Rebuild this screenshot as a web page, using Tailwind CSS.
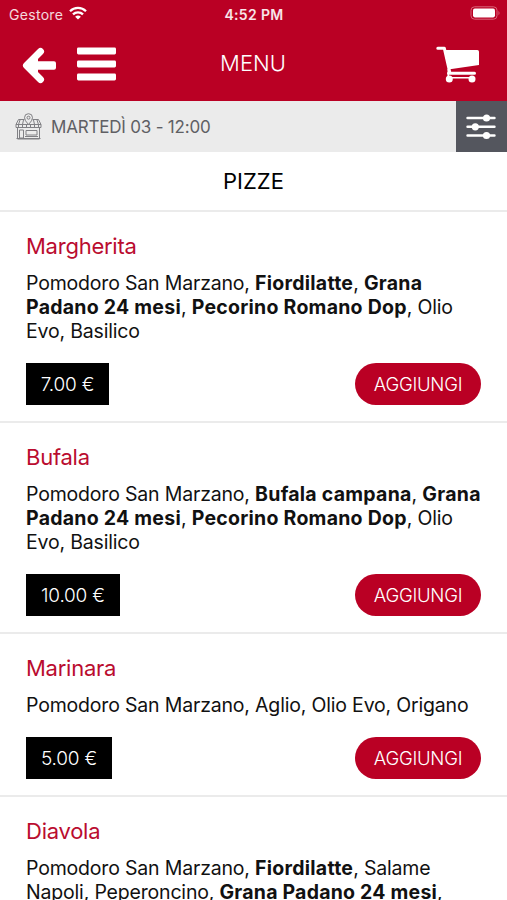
<!DOCTYPE html>
<html lang="it">
<head>
<meta charset="utf-8">
<title>Menu</title>
<script src="https://cdn.jsdelivr.net/npm/@tailwindcss/browser@4"></script>
</head>
<body class="h-[900px] w-[507px] overflow-hidden bg-white font-['Inter','Liberation_Sans',sans-serif] text-[#111]">
<header class="h-[101px] bg-[#ba0024] text-white">
  <div class="grid h-7 grid-cols-3 items-center pr-[6px] pl-[9px]">
    <div class="flex items-center gap-[6px]">
      <span class="text-[14px] tracking-[0.3px] text-white/85">Gestore</span>
      <svg class="-mt-[2px] h-[14px] w-[18px]" viewBox="0 0 18 14" fill="none" stroke="white" stroke-width="2.3"><path d="M1 5.2a11.4 11.4 0 0 1 16 0M4 8.4a7.1 7.1 0 0 1 10 0"/><path d="M9 13.6 6.1 10.8a4.2 4.2 0 0 1 5.8 0z" fill="white" stroke="none"/></svg>
    </div>
    <span class="-ml-[2px] text-center text-[14px] font-semibold tracking-[0.35px] whitespace-nowrap text-white/90">4:52 PM</span>
    <svg class="-mt-[2px] h-[14px] w-[31px] justify-self-end" viewBox="0 0 31 14"><rect x="1" y=".8" width="26" height="12.4" rx="3.5" fill="none" stroke="#d9647a"/><rect x="3" y="2.6" width="22" height="8.8" rx="1.8" fill="white"/><path d="M28.5 4.7q2 2.3 0 4.6z" fill="#d9647a"/></svg>
  </div>
  <div class="grid h-[71px] grid-cols-3 items-center pr-[27px] pl-[22px]">
    <div class="flex items-center gap-5">
      <svg class="mt-[3px] h-[37px] w-[35px]" viewBox="0 0 35 37" fill="none" stroke="white"><path d="M18.500 4.500 4.500 18.500 18.500 32.500" stroke-width="7" stroke-linecap="round" stroke-linejoin="round"/><path d="M6 18.500 16 8.500V28.500z" fill="white" stroke="none"/><rect x="8" y="14.300" width="26" height="8.400" rx="2" fill="white" stroke="none"/></svg>
      <svg class="h-[34px] w-[39px] shrink-0" viewBox="0 0 39 34" fill="white"><rect y="0.5" width="39" height="7" rx="1.4"/><rect y="13.5" width="39" height="7" rx="1.4"/><rect y="26.5" width="39" height="7" rx="1.4"/></svg>
    </div>
    <h1 class="pl-1 text-center text-[22px] font-light tracking-[0px]">MENU</h1>
    <svg class="mt-[2px] h-[38px] w-[44px] justify-self-end" viewBox="0 0 44 38" fill="none" stroke="white"><path d="M1.800 2.200H8.300L13.800 26.500M12.500 27.300H38.500" stroke-width="3" stroke-linecap="round" stroke-linejoin="round"/><path d="M9 4H41.300q1.700 0 1.700 1.700V19L14 23.300z" fill="white" stroke="none"/><path d="M12.300 23V32.500M12.300 31.800H36" stroke-width="1.600"/><circle cx="13.300" cy="33" r="3.500" fill="white" stroke="none"/><circle cx="36" cy="33" r="3.500" fill="white" stroke="none"/></svg>
  </div>
</header>
<div class="flex h-[51px] bg-[#ebebeb]">
  <div class="flex flex-1 items-center gap-[9px] pl-[15px] text-[#5f5f64]">
    <svg class="h-[27px] w-[27px]" viewBox="0 0 27 27" fill="none" stroke="#808084"><path d="M9.5 6.5H3.5L1 11.5v3h25v-3l-2.500-5h-6M1 11.500h25M5 7l-1.500 4.500v3M8.500 7l-1 4.500v3M11.500 11.500v3M15.500 11.500v3M18.500 7l1 4.500v3M22 7l1.500 4.500v3M2.500 15v11h22V15M1.500 25.500h24M4.500 17h4v8h-4zM11 17.500h11v4.500H11zM10 23.500h13"/><path d="M13.500 11.500Q9.500 7.500 9.500 4.700a4 4 0 0 1 8 0q0 2.800-4 6.800z" fill="#ebebeb"/><circle cx="13.500" cy="4.700" r="1.500"/></svg>
    <span class="pt-[2px] text-[17px] tracking-[-0.2px]">MARTEDÌ 03 - 12:00</span>
  </div>
  <button class="flex w-[51px] items-center justify-center bg-[#54565e] pr-[2px]" aria-label="Filtri">
    <svg class="h-[28px] w-[30px]" viewBox="0 0 30 28" fill="white" stroke="white" stroke-width="2.400" stroke-linecap="round"><path d="M1.500 5h27M1.500 13.800h27M1.500 22.500h27"/><circle cx="20.500" cy="5" r="2.400"/><circle cx="9.300" cy="13.800" r="2.400"/><circle cx="20.500" cy="22.500" r="2.400"/></svg>
  </button>
</div>
<h2 class="flex h-[60px] items-center justify-center border-b-2 border-[#ebebeb] text-[22px] tracking-[0px] text-black">PIZZE</h2>
<main>
  <article class="border-b-2 border-[#ebebeb] px-[26px] pt-5 pb-4">
    <h3 class="text-[22px] leading-7 tracking-[-0.25px] text-[#ba0c2f]">Margherita</h3>
    <p class="mt-[11px] text-[19.5px] leading-6 tracking-[-0.18px] whitespace-nowrap">Pomodoro San Marzano, <b class="font-bold tracking-[0.25px]">Fiordilatte</b>, <b class="font-bold tracking-[0.25px]">Grana<br>Padano 24 mesi</b>, <b class="font-bold tracking-[0.25px]">Pecorino Romano Dop</b>, Olio<br>Evo, Basilico</p>
    <div class="mt-5 flex h-[42px] justify-between text-[19px] text-white">
      <span class="flex w-[83px] items-center justify-center bg-black pt-[2px] font-light tracking-[-0.2px]">7.00 €</span>
      <button class="w-[126px] rounded-full bg-[#ba0024] pt-[2px] text-[18.5px] font-light tracking-[-0.25px]">AGGIUNGI</button>
    </div>
  </article>
  <article class="border-b-2 border-[#ebebeb] px-[26px] pt-5 pb-4">
    <h3 class="text-[22px] leading-7 tracking-[-0.25px] text-[#ba0c2f]">Bufala</h3>
    <p class="mt-[11px] text-[19.5px] leading-6 tracking-[-0.18px] whitespace-nowrap">Pomodoro San Marzano, <b class="font-bold tracking-[0.25px]">Bufala campana</b>, <b class="font-bold tracking-[0.25px]">Grana<br>Padano 24 mesi</b>, <b class="font-bold tracking-[0.25px]">Pecorino Romano Dop</b>, Olio<br>Evo, Basilico</p>
    <div class="mt-5 flex h-[42px] justify-between text-[19px] text-white">
      <span class="flex w-[94px] items-center justify-center bg-black pt-[2px] font-light tracking-[-0.2px]">10.00 €</span>
      <button class="w-[126px] rounded-full bg-[#ba0024] pt-[2px] text-[18.5px] font-light tracking-[-0.25px]">AGGIUNGI</button>
    </div>
  </article>
  <article class="border-b-2 border-[#ebebeb] px-[26px] pt-5 pb-4">
    <h3 class="text-[22px] leading-7 tracking-[-0.25px] text-[#ba0c2f]">Marinara</h3>
    <p class="mt-[11px] text-[19.5px] leading-6 tracking-[-0.18px] whitespace-nowrap">Pomodoro San Marzano, Aglio, Olio Evo, Origano</p>
    <div class="mt-5 flex h-[42px] justify-between text-[19px] text-white">
      <span class="flex w-[86px] items-center justify-center bg-black pt-[2px] font-light tracking-[-0.2px]">5.00 €</span>
      <button class="w-[126px] rounded-full bg-[#ba0024] pt-[2px] text-[18.5px] font-light tracking-[-0.25px]">AGGIUNGI</button>
    </div>
  </article>
  <article class="px-[26px] pt-5">
    <h3 class="text-[22px] leading-7 tracking-[-0.25px] text-[#ba0c2f]">Diavola</h3>
    <p class="mt-[11px] text-[19.5px] leading-6 tracking-[-0.18px] whitespace-nowrap">Pomodoro San Marzano, <b class="font-bold tracking-[0.25px]">Fiordilatte</b>, Salame<br>Napoli, Peperoncino, <b class="font-bold tracking-[0.22px]">Grana Padano 24 mesi</b>,</p>
  </article>
</main>
</body>
</html>
